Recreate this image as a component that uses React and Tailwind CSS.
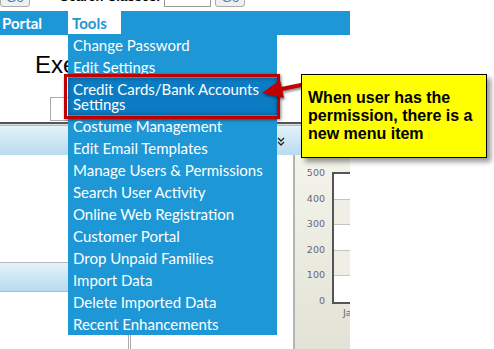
import React from 'react'

const menuItems = [
  'Change Password',
  'Edit Settings',
  'Credit Cards/Bank Accounts Settings',
  'Costume Management',
  'Edit Email Templates',
  'Manage Users & Permissions',
  'Search User Activity',
  'Online Web Registration',
  'Customer Portal',
  'Drop Unpaid Families',
  'Import Data',
  'Delete Imported Data',
  'Recent Enhancements'
]

const axisLabels = ['500', '400', '300', '200', '100', '0']

function ToolsMenu() {
  return (
    <div className="absolute left-[68px] top-[34px] w-[209px] bg-[#1d97d5] font-['Lato',sans-serif] text-[15px] text-white">
      {menuItems.map((item, index) => (
        <div
          key={index}
          className={`pl-[5px] pr-2 py-[3.5px] leading-[15px] ${
            index === 2 ? 'bg-[#0b7bc3] shadow-[inset_0_0_4px_rgba(0,0,0,0.35)]' : ''
          }`}
        >
          {item}
        </div>
      ))}
    </div>
  )
}

function Chart() {
  return (
    <div className="w-[57px] shrink-0 h-full overflow-hidden border-l-2 border-[#b4b4b0] bg-gradient-to-b from-[#f4f4ec] to-[#e2e2d6] flex font-['DejaVu_Sans',sans-serif] text-[9.5px] text-[#66667a]">
      <div className="w-[33px] shrink-0 pt-[5px] pr-[3px] text-right">
        {axisLabels.map(label => (
          <div key={label} className="h-[25.6px] leading-[25.6px]">
            {label}
          </div>
        ))}
      </div>
      <div className="ml-[4px] pt-[17px] flex-1 min-w-0">
        <div className="border-2 border-r-0 border-[#555] w-[30px]">
          {['bg-white', 'bg-[#efefe6]', 'bg-white', 'bg-[#efefe6]', 'bg-white'].map(
            (bg, i) => (
              <div
                key={i}
                className={`h-[25.6px] ${bg} ${i < 4 ? 'border-b border-[#c4c4c0]' : ''}`}
              />
            )
          )}
        </div>
        <div className="pl-[11px] mt-[3px] leading-[12px] whitespace-nowrap">Jan</div>
      </div>
    </div>
  )
}

export default function App() {
  return (
    <div className="relative w-[494px] h-[349px] overflow-hidden bg-white font-['Liberation_Sans',Arial,sans-serif]">
      {/* search strip, mostly cut off at the top */}
      <div className="flex items-start h-[11px] overflow-hidden">
        <button className="-mt-[17px] w-[30px] h-[24px] border border-[#aaa] rounded-[3px] bg-[#f0f0f0] text-[13px] text-[#4a7db0] pt-[4px]">
          Go
        </button>
        <span className="-mt-[11px] ml-[30px] text-[13px] leading-[16px] font-bold text-black">
          Search Classes:
        </span>
        <div className="-mt-[17px] ml-[4px] w-[47px] h-[24px] border border-[#999] bg-white" />
        <button className="-mt-[17px] ml-[4px] w-[30px] h-[24px] border border-[#aaa] rounded-[3px] bg-[#f0f0f0] text-[13px] text-[#4a7db0] pt-[4px]">
          Go
        </button>
      </div>

      {/* nav bar */}
      <div className="w-[350px] h-[24px] bg-[#1d97d5] flex font-['Lato',sans-serif] text-[15px] font-bold">
        <div className="w-[68px] pl-[2px] leading-[24px] text-white">Portal</div>
        <div className="w-[53px] pl-[4px] leading-[24px] bg-white text-[#1d97d5]">Tools</div>
      </div>

      {/* page content */}
      <div className="w-[350px]">
        <div className="mt-[16px] pl-[35px] text-[24px] leading-[28px] text-black">
          Executive Stats
        </div>
        <div className="mt-[18px] pl-[50px] flex gap-2">
          <div className="w-[100px] h-[24px] border border-[#aaa] bg-white" />
        </div>
        <div className="mt-[1px] h-[2px] bg-[#555]" />
        <div className="h-[1px] bg-[#ddd]" />
        <div className="h-[30px] border-t border-[#b8b8b8] bg-gradient-to-b from-[#e4f2fa] to-[#b8dbef] flex items-center">
          <svg className="ml-[277px] mt-[2px]" width="8" height="9" viewBox="0 0 8 9">
            <path d="M1 1l3 3 3-3M1 5l3 3 3-3" fill="none" stroke="#222" strokeWidth="1.3" />
          </svg>
        </div>
        <div className="flex h-[194px]">
          <div className="w-[293px] shrink-0 flex flex-col">
            <div className="mt-[107px] w-[200px] h-[30px] border-y border-[#b8b8b8] bg-gradient-to-b from-[#e4f2fa] to-[#b8dbef]" />
            <div className="ml-[128px] w-[3px] flex-1 border-x border-[#aaa]" />
          </div>
          <Chart />
        </div>
      </div>

      <ToolsMenu />

      {/* annotation: red frame, arrow and callout */}
      <div className="absolute left-[64px] top-[74px] w-[216px] h-[45px] border-[3px] border-[#c00000] shadow-[1px_1px_3px_rgba(0,0,0,0.5)]" />
      <svg
        className="absolute left-[255px] top-[74px] drop-shadow-[1px_2px_1px_rgba(0,0,0,0.45)]"
        width="56"
        height="32"
        viewBox="0 0 56 32"
      >
        <line x1="51" y1="10" x2="24" y2="15.5" stroke="#c00000" strokeWidth="4" />
        <polygon points="7,19 25,6 29,24" fill="#c00000" />
      </svg>
      <div className="absolute left-[301px] top-[74px] w-[186px] h-[84px] border border-black bg-[#ffff00] shadow-[4px_4px_5px_rgba(0,0,0,0.4)] flex items-center pl-[6px]">
        <p className="text-[16px] leading-[18px] font-bold text-black">
          When user has the permission, there is a new menu item
        </p>
      </div>
    </div>
  )
}
